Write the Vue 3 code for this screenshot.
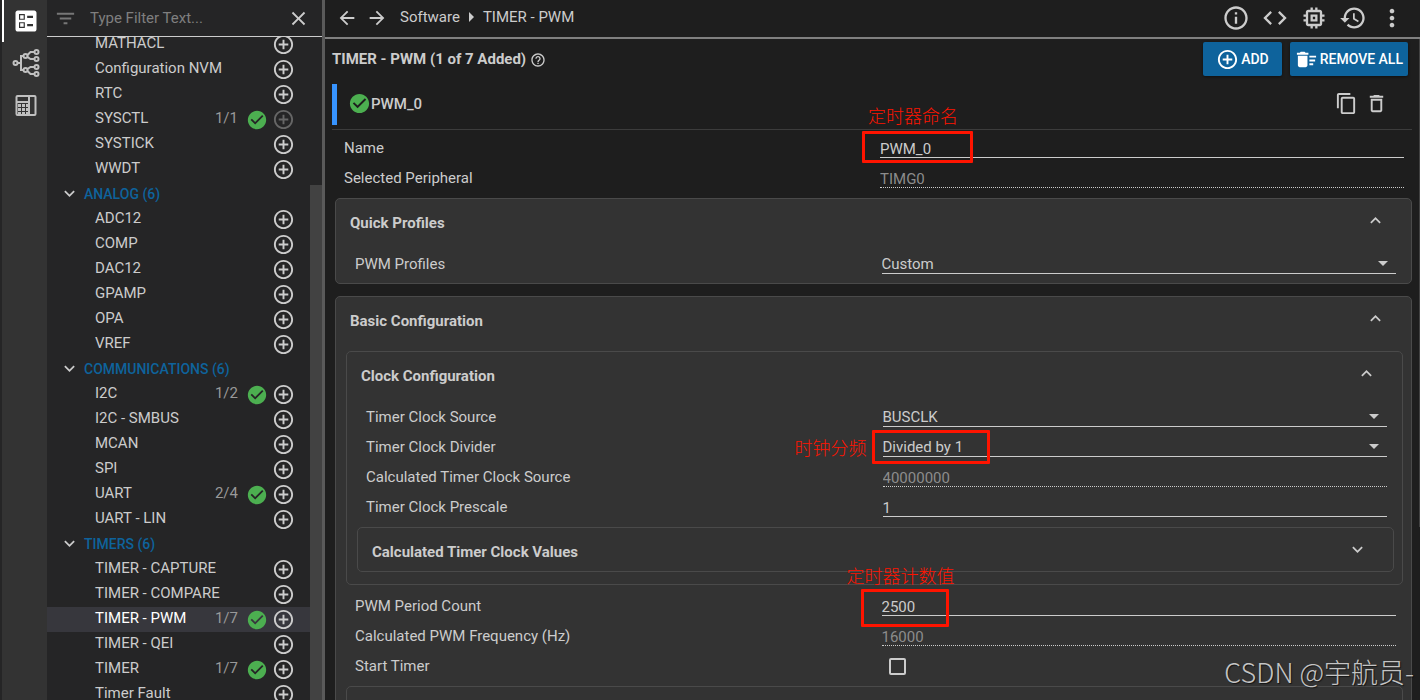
<template>
  <div class="app">
    <nav class="rail">
      <button class="rail-btn active" aria-label="Configuration">
        <svg class="icon-lg" viewBox="0 0 24 24"><path :d="icons.ballot" /></svg>
      </button>
      <button class="rail-btn" aria-label="Clock tree">
        <svg class="icon-lg line" viewBox="0 0 28 28">
          <circle cx="3.500" cy="14" r="2" />
          <circle cx="13.500" cy="7" r="2" />
          <circle cx="13.500" cy="21" r="2" />
          <circle cx="24.500" cy="3" r="2" />
          <circle cx="24.500" cy="10" r="2" />
          <circle cx="24.500" cy="18" r="2" />
          <circle cx="24.500" cy="25" r="2" />
          <path d="M5.500 14H9M11.500 7H9v14h2.500M15.500 6l3-3h4M15.500 8l3 2h4M15.500 20l3-2h4M15.500 22l3 3h4" />
        </svg>
      </button>
      <button class="rail-btn" aria-label="Calculator">
        <svg class="icon-lg line" viewBox="0 0 28 28">
          <rect x="4.500" y="5" width="19" height="19" rx="1" />
          <path d="M17 5v19M5 11h12" />
          <path class="dots" d="M6 13h3v3H6zM10 13h3v3h-3zM14 13h2v3h-2zM6 17h3v3H6zM10 17h3v3h-3zM14 17h2v3h-2zM6 21h3v2H6zM10 21h3v2h-3zM14 21h2v2h-2z" />
        </svg>
      </button>
    </nav>

    <aside class="sidebar">
      <div class="filter">
        <svg class="icon-md filter-icon" viewBox="0 0 24 24"><path :d="icons.filter" /></svg>
        <input v-model="filterText" type="text" placeholder="Type Filter Text..." aria-label="Type Filter Text" />
        <button aria-label="Clear filter" @click="filterText = ''">
          <svg class="icon-md" viewBox="0 0 24 24"><path :d="icons.close" /></svg>
        </button>
      </div>
      <div class="tree">
        <div class="tree-list">
          <template v-for="group in groups" :key="group.name">
            <button v-if="group.name" class="category">
              <svg class="icon-sm" viewBox="0 0 24 24"><path :d="icons.down" /></svg>
              <span>{{ group.name }} ({{ group.items.length }})</span>
            </button>
            <div
              v-for="item in group.items"
              :key="item.name"
              :class="['item', { selected: item.name === 'TIMER - PWM' }]"
            >
              <span class="item-name">{{ item.name }}</span>
              <span v-if="item.count" class="item-count">{{ item.count }}</span>
              <svg v-if="item.count" class="icon-check" viewBox="0 0 24 24"><path :d="icons.check" /></svg>
              <button class="item-add" :disabled="item.full" :aria-label="'Add ' + item.name">
                <svg class="icon-md" viewBox="0 0 24 24"><path :d="icons.add" /></svg>
              </button>
            </div>
          </template>
        </div>
        <div class="tree-thumb"></div>
      </div>
    </aside>

    <main class="main">
      <header class="topbar">
        <button aria-label="Back"><svg class="icon-nav" viewBox="0 0 24 24"><path :d="icons.back" /></svg></button>
        <button aria-label="Forward"><svg class="icon-nav" viewBox="0 0 24 24"><path :d="icons.forward" /></svg></button>
        <div class="crumbs">
          <a href="#">Software</a>
          <svg class="crumb-arrow" viewBox="0 0 5 10"><path d="M0 0l5 5-5 5z" /></svg>
          <span>TIMER - PWM</span>
        </div>
        <div class="tools">
          <button v-for="tool in tools" :key="tool" :aria-label="tool">
            <svg class="icon-lg" viewBox="0 0 24 24"><path :d="icons[tool]" /></svg>
          </button>
        </div>
      </header>

      <div class="content">
        <div class="title-row">
          <h1>TIMER - PWM (1 of 7 Added)</h1>
          <svg class="help" viewBox="0 0 24 24"><path :d="icons.help" /></svg>
          <button class="action add">
            <svg class="icon-md" viewBox="0 0 24 24"><path :d="icons.add" /></svg>ADD
          </button>
          <button class="action">
            <svg class="icon-md" viewBox="0 0 24 24"><path :d="icons.sweep" /></svg>REMOVE ALL
          </button>
        </div>

        <div class="instance">
          <div class="instance-head">
            <svg class="icon-md green" viewBox="0 0 24 24"><path :d="icons.check" /></svg>
            <h2>PWM_0</h2>
            <button aria-label="Duplicate"><svg class="icon-md" viewBox="0 0 24 24"><path :d="icons.copy" /></svg></button>
            <button aria-label="Delete"><svg class="icon-md" viewBox="0 0 24 24"><path :d="icons.trash" /></svg></button>
          </div>
        </div>

        <div class="field">
          <label for="name">Name</label>
          <div class="value">
            <input id="name" v-model="form.name" type="text" />
            <div class="mark mark-name"><span>定时器命名</span></div>
          </div>
        </div>
        <div class="field">
          <label for="peripheral">Selected Peripheral</label>
          <div class="value"><input id="peripheral" value="TIMG0" type="text" disabled /></div>
        </div>

        <section class="card">
          <div class="card-head">
            <h3>Quick Profiles</h3>
            <button aria-label="Collapse"><svg class="icon-sm" viewBox="0 0 24 24"><path :d="icons.up" /></svg></button>
          </div>
          <div class="card-body">
            <div class="field">
              <label for="profile">PWM Profiles</label>
              <div class="value">
                <select id="profile"><option>Custom</option></select>
                <svg class="caret" viewBox="0 0 10 5"><path d="M0 0h10L5 5z" /></svg>
              </div>
            </div>
          </div>
        </section>

        <section class="card">
          <div class="card-head">
            <h3>Basic Configuration</h3>
            <button aria-label="Collapse"><svg class="icon-sm" viewBox="0 0 24 24"><path :d="icons.up" /></svg></button>
          </div>
          <div class="card-body">
            <section class="card nested">
              <div class="card-head">
                <h3>Clock Configuration</h3>
                <button aria-label="Collapse"><svg class="icon-sm" viewBox="0 0 24 24"><path :d="icons.up" /></svg></button>
              </div>
              <div class="card-body">
                <div class="field">
                  <label for="source">Timer Clock Source</label>
                  <div class="value">
                    <select id="source"><option>BUSCLK</option></select>
                    <svg class="caret" viewBox="0 0 10 5"><path d="M0 0h10L5 5z" /></svg>
                  </div>
                </div>
                <div class="field">
                  <label for="divider">Timer Clock Divider</label>
                  <div class="value">
                    <select id="divider"><option>Divided by 1</option></select>
                    <svg class="caret" viewBox="0 0 10 5"><path d="M0 0h10L5 5z" /></svg>
                    <div class="mark mark-divider"><span>时钟分频</span></div>
                  </div>
                </div>
                <div class="field">
                  <label for="calc-source">Calculated Timer Clock Source</label>
                  <div class="value"><input id="calc-source" value="40000000" type="text" disabled /></div>
                </div>
                <div class="field">
                  <label for="prescale">Timer Clock Prescale</label>
                  <div class="value"><input id="prescale" v-model="form.prescale" type="text" /></div>
                </div>
                <section class="card nested">
                  <div class="card-head">
                    <h3>Calculated Timer Clock Values</h3>
                    <button aria-label="Expand"><svg class="icon-sm" viewBox="0 0 24 24"><path :d="icons.down" /></svg></button>
                  </div>
                </section>
              </div>
            </section>
            <div class="field">
              <label for="period">PWM Period Count</label>
              <div class="value">
                <input id="period" v-model="form.period" type="text" />
                <div class="mark mark-period"><span>定时器计数值</span></div>
              </div>
            </div>
            <div class="field">
              <label for="frequency">Calculated PWM Frequency (Hz)</label>
              <div class="value"><input id="frequency" :value="frequency" type="text" disabled /></div>
            </div>
            <div class="field">
              <label for="start">Start Timer</label>
              <div class="value"><input id="start" v-model="form.start" type="checkbox" /></div>
            </div>
            <section class="card nested"><div class="card-head"></div></section>
          </div>
        </section>
      </div>
      <div class="main-thumb"></div>
      <div class="watermark">CSDN @宇航员-</div>
    </main>
  </div>
</template>

<script setup>
import { ref, reactive, computed } from 'vue'

const filterText = ref('')

const form = reactive({
  name: 'PWM_0',
  prescale: '1',
  period: '2500',
  start: false
})

const frequency = computed(() => Math.round(40000000 / Number(form.prescale) / Number(form.period)))

const tools = ['info', 'code', 'chip', 'history', 'more']

const groups = [
  {
    name: '',
    items: [
      { name: 'MATHACL' },
      { name: 'Configuration NVM' },
      { name: 'RTC' },
      { name: 'SYSCTL', count: '1/1', full: true },
      { name: 'SYSTICK' },
      { name: 'WWDT' }
    ]
  },
  {
    name: 'ANALOG',
    items: [
      { name: 'ADC12' },
      { name: 'COMP' },
      { name: 'DAC12' },
      { name: 'GPAMP' },
      { name: 'OPA' },
      { name: 'VREF' }
    ]
  },
  {
    name: 'COMMUNICATIONS',
    items: [
      { name: 'I2C', count: '1/2' },
      { name: 'I2C - SMBUS' },
      { name: 'MCAN' },
      { name: 'SPI' },
      { name: 'UART', count: '2/4' },
      { name: 'UART - LIN' }
    ]
  },
  {
    name: 'TIMERS',
    items: [
      { name: 'TIMER - CAPTURE' },
      { name: 'TIMER - COMPARE' },
      { name: 'TIMER - PWM', count: '1/7' },
      { name: 'TIMER - QEI' },
      { name: 'TIMER', count: '1/7' },
      { name: 'Timer Fault' }
    ]
  }
]

const icons = {
  ballot: 'M13 9.5h5v-2h-5v2zm0 7h5v-2h-5v2zm6 4.500H5c-1.100 0-2-.9-2-2V5c0-1.100.9-2 2-2h14c1.100 0 2 .9 2 2v14c0 1.100-.9 2-2 2zM6 11h5V6H6v5zm1-4h3v3H7V7zM6 18h5v-5H6v5zm1-4h3v3H7v-3z',
  filter: 'M10 18h4v-2h-4v2zM3 6v2h18V6H3zm3 7h12v-2H6v2z',
  close: 'M19 6.410L17.590 5 12 10.590 6.410 5 5 6.410 10.590 12 5 17.590 6.410 19 12 13.410 17.590 19 19 17.590 13.410 12z',
  down: 'M7.410 8.590L12 13.170l4.590-4.580L18 10l-6 6-6-6z',
  up: 'M7.410 15.410L12 10.830l4.590 4.580L18 14l-6-6-6 6z',
  add: 'M13 7h-2v4H7v2h4v4h2v-4h4v-2h-4V7zm-1-5C6.480 2 2 6.480 2 12s4.480 10 10 10 10-4.480 10-10S17.520 2 12 2zm0 18c-4.410 0-8-3.590-8-8s3.590-8 8-8 8 3.590 8 8-3.590 8-8 8z',
  check: 'M12 2C6.480 2 2 6.480 2 12s4.480 10 10 10 10-4.480 10-10S17.520 2 12 2zm-2 15l-5-5 1.410-1.410L10 14.170l7.590-7.590L19 8l-9 9z',
  back: 'M20 11H7.830l5.590-5.590L12 4l-8 8 8 8 1.410-1.410L7.830 13H20v-2z',
  forward: 'M12 4l-1.410 1.410L16.170 11H4v2h12.170l-5.580 5.590L12 20l8-8z',
  help: 'M11 18h2v-2h-2v2zm1-16C6.480 2 2 6.480 2 12s4.480 10 10 10 10-4.480 10-10S17.520 2 12 2zm0 18c-4.410 0-8-3.590-8-8s3.590-8 8-8 8 3.590 8 8-3.590 8-8 8zm0-14c-2.210 0-4 1.790-4 4h2c0-1.100.9-2 2-2s2 .9 2 2c0 2-3 1.750-3 5h2c0-2.250 3-2.500 3-5 0-2.210-1.790-4-4-4z',
  info: 'M11 7h2v2h-2zm0 4h2v6h-2zm1-9C6.480 2 2 6.480 2 12s4.480 10 10 10 10-4.480 10-10S17.520 2 12 2zm0 18c-4.410 0-8-3.590-8-8s3.590-8 8-8 8 3.590 8 8-3.590 8-8 8z',
  code: 'M9.400 16.600L4.800 12l4.600-4.600L8 6l-6 6 6 6 1.400-1.400zm5.200 0l4.600-4.600-4.600-4.600L16 6l6 6-6 6-1.400-1.400z',
  chip: 'M15 9H9v6h6V9zm-2 4h-2v-2h2v2zm8-2V9h-2V7c0-1.100-.9-2-2-2h-2V3h-2v2h-2V3H9v2H7c-1.100 0-2 .9-2 2v2H3v2h2v2H3v2h2v2c0 1.100.9 2 2 2h2v2h2v-2h2v2h2v-2h2c1.100 0 2-.9 2-2v-2h2v-2h-2v-2h2zm-4 6H7V7h10v10z',
  history: 'M13 3c-4.970 0-9 4.030-9 9H1l3.890 3.890.07.140L9 12H6c0-3.870 3.130-7 7-7s7 3.130 7 7-3.130 7-7 7c-1.930 0-3.680-.790-4.940-2.060l-1.420 1.420C8.270 19.990 10.510 21 13 21c4.970 0 9-4.030 9-9s-4.030-9-9-9zm-1 5v5l4.280 2.540.72-1.210-3.500-2.080V8H12z',
  more: 'M12 8c1.100 0 2-.9 2-2s-.9-2-2-2-2 .9-2 2 .9 2 2 2zm0 2c-1.100 0-2 .9-2 2s.9 2 2 2 2-.9 2-2-.9-2-2-2zm0 6c-1.100 0-2 .9-2 2s.9 2 2 2 2-.9 2-2-.9-2-2-2z',
  sweep: 'M15 16h4v2h-4zm0-8h7v2h-7zm0 4h6v2h-6zM3 18c0 1.100.9 2 2 2h6c1.100 0 2-.9 2-2V8H3v10zM14 5h-3l-1-1H6L5 5H2v2h12z',
  copy: 'M16 1H4c-1.100 0-2 .9-2 2v14h2V3h12V1zm3 4H8c-1.100 0-2 .9-2 2v14c0 1.100.9 2 2 2h11c1.100 0 2-.9 2-2V7c0-1.100-.9-2-2-2zm0 16H8V7h11v14z',
  trash: 'M6 19c0 1.100.9 2 2 2h8c1.100 0 2-.9 2-2V7H6v12zM8 9h8v10H8V9zm7.500-5l-1-1h-5l-1 1H5v2h14V4z'
}
</script>

<style>
body {
  margin: 0;
  background: #1e1e1e;
}
</style>

<style scoped>
.app {
  display: flex;
  height: 100vh;
  overflow: hidden;
  background: #1e1e1e;
  color: #cccccc;
  font-family: Roboto, 'Noto Sans CJK SC', sans-serif;
  font-size: 15px;
  line-height: 20px;
}

button {
  display: flex;
  align-items: center;
  justify-content: center;
  padding: 0;
  border: none;
  background: transparent;
  color: inherit;
  font: inherit;
  cursor: pointer;
}

svg {
  display: block;
  flex-shrink: 0;
  fill: currentColor;
}

h1,
h2,
h3 {
  margin: 0;
  font-size: 15px;
  line-height: 20px;
}

.icon-sm {
  width: 21px;
  height: 21px;
}

.icon-nav {
  width: 22px;
  height: 22px;
}

.icon-md {
  width: 23px;
  height: 23px;
}

.icon-lg {
  width: 28px;
  height: 28px;
}

.icon-check {
  width: 22px;
  height: 22px;
  color: #4caf50;
}

.green {
  color: #4caf50;
}

/* Activity rail */
.rail {
  display: flex;
  flex-direction: column;
  flex-shrink: 0;
  width: 45px;
  border-left: 2px solid #252526;
  background: #333333;
}

.rail-btn {
  height: 42px;
  border-left: 2px solid transparent;
  color: #c0c0c0;
}

.rail-btn.active {
  border-left-color: #ffffff;
  color: #ffffff;
}

.line {
  fill: none;
  stroke: currentColor;
  stroke-width: 2;
}

.dots {
  fill: currentColor;
  stroke: none;
}

/* Module list */
.sidebar {
  display: flex;
  flex-direction: column;
  flex-shrink: 0;
  width: 275px;
  border-right: 3px solid #5a5a5a;
  background: #252526;
}

.filter {
  display: flex;
  align-items: center;
  height: 36px;
  padding: 0 12px 0 7px;
  border-bottom: 1px solid #cccccc;
}

.filter-icon {
  color: #777777;
}

.filter input {
  flex: 1;
  min-width: 0;
  margin-left: 13px;
  padding: 0;
  border: none;
  outline: none;
  background: transparent;
  color: #cccccc;
  font: inherit;
}

.filter input::placeholder {
  color: #7f7f7f;
  opacity: 1;
}

.tree {
  position: relative;
  flex: 1;
  min-height: 0;
  overflow: hidden;
}

.tree-list {
  margin: -5px 12px 0 0;
}

.tree-thumb {
  position: absolute;
  top: 148px;
  right: 0;
  bottom: 0;
  width: 12px;
  background: #424242;
}

.category {
  gap: 4px;
  height: 25px;
  padding: 0 0 2px 12px;
  font-size: 14px;
  font-weight: 500;
}

.category span {
  color: #0e639c;
}

.item {
  display: flex;
  align-items: center;
  height: 25px;
  padding: 0 15px 0 48px;
}

.item.selected {
  background: #37373d;
}

.item-name {
  flex: 1;
  padding-bottom: 4px;
}

.selected .item-name {
  color: #ffffff;
}

.item-count {
  padding: 0 8px 4px 0;
  color: #999999;
}

.item-add {
  margin-left: 4px;
}

.item-add:disabled {
  color: #666666;
}

/* Main panel */
.main {
  position: relative;
  display: flex;
  flex: 1;
  flex-direction: column;
  min-width: 0;
}

.topbar {
  display: flex;
  flex-shrink: 0;
  align-items: center;
  gap: 8px;
  height: 36px;
  padding: 0 14px 1px 11px;
  border-bottom: 2px solid #808080;
}

.crumbs {
  display: flex;
  flex: 1;
  align-items: center;
  gap: 9px;
  margin-left: 4px;
  padding-bottom: 2px;
}

.crumbs a {
  color: inherit;
  text-decoration: none;
}

.crumb-arrow {
  width: 5px;
  height: 10px;
}

.tools {
  display: flex;
  gap: 11px;
}

.content {
  flex: 1;
  min-height: 0;
  padding: 0 8px 0 10px;
  overflow: hidden;
}

.title-row {
  display: flex;
  align-items: center;
  gap: 8px;
  height: 40px;
  margin: 0 4px 5px -3px;
}

.help {
  width: 16px;
  height: 16px;
  margin: 2px auto 0 -4px;
}

.action {
  gap: 2px;
  height: 34px;
  padding: 0 5px;
  border-radius: 2px;
  background: #0e639c;
  color: #ffffff;
  font-size: 14px;
  font-weight: 500;
  box-shadow: 0 1px 3px rgba(0, 0, 0, 0.5);
}

.action.add {
  padding: 0 13px;
}

.instance {
  margin-left: -3px;
  padding-bottom: 4px;
  border-bottom: 1px solid #3c3c3c;
}

.instance-head {
  display: flex;
  align-items: center;
  gap: 7px;
  box-sizing: border-box;
  height: 41px;
  padding: 0 24px 2px 11px;
  border-left: 5px solid #3794ff;
}

.instance-head h2 {
  flex: 1;
  margin-left: -7px;
  font-weight: 500;
}

.field {
  display: grid;
  grid-template-columns: 1fr 1fr;
  column-gap: 12px;
  margin: 0 8px 2px 9px;
  padding-top: 8px;
}

.value {
  position: relative;
  height: 20px;
}

.value input[type='text'],
.value select {
  display: block;
  box-sizing: border-box;
  width: 100%;
  height: 20px;
  padding: 0;
  border: none;
  border-bottom: 1px solid #cccccc;
  border-radius: 0;
  outline: none;
  appearance: none;
  background: transparent;
  color: #cccccc;
  font: inherit;
}

.value input[type='text'] {
  padding-top: 2px;
}

.value input[type='text']:disabled {
  border-bottom-style: dotted;
  color: #8c8c8c;
}

.value input[type='checkbox'] {
  display: block;
  width: 17px;
  height: 17px;
  margin: 2px 0 0 7px;
  border: 2px solid #cccccc;
  border-radius: 2px;
  box-sizing: border-box;
  appearance: none;
}

.caret {
  position: absolute;
  top: 7px;
  right: 8px;
  width: 10px;
  height: 5px;
  pointer-events: none;
}

.card {
  margin-top: 12px;
  border: 1px solid #4a4a4a;
  border-radius: 5px;
  background: #333333;
}

.field + .card {
  margin-top: 10px;
}

.card-head {
  display: flex;
  align-items: flex-start;
  justify-content: space-between;
  min-height: 25px;
  padding: 9px 25px 9px 14px;
}

.card-head h3 {
  padding-top: 5px;
}

.card-head button {
  height: 24px;
}

.card-body {
  padding: 4px 8px 7px 10px;
}

.card-body > .field {
  margin-right: 7px;
}

.card.nested {
  margin-bottom: 3px;
}

.nested .card-body {
  padding-bottom: 9px;
}

.card.nested:first-child {
  margin-top: 7px;
}

/* Red callouts over the fields they explain */
.mark {
  position: absolute;
  z-index: 1;
  box-sizing: border-box;
  border: 3px solid #ff1400;
  border-radius: 1px;
  pointer-events: none;
}

.mark span {
  position: absolute;
  color: #ff1400;
  font-family: 'Noto Sans CJK SC', sans-serif;
  font-size: 18px;
  font-weight: 300;
  white-space: nowrap;
}

.mark-name {
  top: -7px;
  left: -18px;
  width: 111px;
  height: 32px;
}

.mark-name span {
  bottom: 35px;
  left: 3px;
}

.mark-divider {
  top: -7px;
  left: -11px;
  width: 118px;
  height: 34px;
}

.mark-divider span {
  top: 4px;
  right: 120px;
}

.mark-period {
  top: -7px;
  left: -21px;
  width: 88px;
  height: 38px;
}

.mark-period span {
  bottom: 39px;
  left: -17px;
}

.main-thumb {
  position: absolute;
  top: 39px;
  right: 0;
  width: 1px;
  height: 488px;
  background: #424242;
}

.watermark {
  position: absolute;
  right: 6px;
  bottom: 13px;
  color: #c4c4c4;
  font-family: 'Noto Sans CJK SC', sans-serif;
  font-size: 27px;
  font-weight: 300;
  line-height: 30px;
  text-shadow: 1px 1px 1px rgba(0, 0, 0, 0.6);
  pointer-events: none;
}
</style>
